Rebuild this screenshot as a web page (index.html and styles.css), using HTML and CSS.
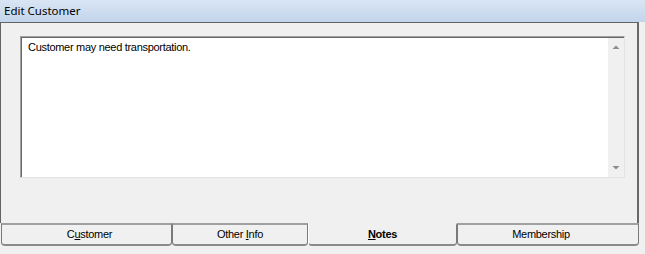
FILE: index.html
```html
<!DOCTYPE html>
<html>
<head>
<meta charset="utf-8">
<link rel="stylesheet" href="styles.css">
</head>
<body>
<div class="window">
  <div class="titlebar">Edit Customer</div>
  <div class="panel">
    <div class="memo">
      <div class="memo-text">Customer may need transportation.</div>
      <div class="scrollbar">
        <svg class="arrow" width="16" height="16" viewBox="0 0 16 16"><polygon points="4.5,11 11.5,11 8,7.5" fill="#8c8c8c"/></svg>
        <svg class="arrow" width="16" height="16" viewBox="0 0 16 16"><polygon points="4.5,5 11.5,5 8,8.5" fill="#8c8c8c"/></svg>
      </div>
    </div>
  </div>
  <div class="tabs">
    <div class="tab tab-customer">C<u>u</u>stomer</div>
    <div class="tab tab-other">Other <u>I</u>nfo</div>
    <div class="tab tab-notes active"><u>N</u>otes</div>
    <div class="tab tab-membership">Membership</div>
  </div>
</div>
</body>
</html>
```

FILE: styles.css
```css
html, body {
  margin: 0;
  padding: 0;
  background: #f0f0f0;
}
.window {
  width: 645px;
  height: 254px;
  overflow: hidden;
  background: #f0f0f0;
  font-family: "Liberation Sans", Arial, sans-serif;
  font-size: 11px;
  letter-spacing: -0.3px;
  color: #000;
}
.titlebar {
  height: 22px;
  line-height: 22px;
  padding-left: 4px;
  font-family: "Noto Sans", "Liberation Sans", sans-serif;
  font-size: 11.5px;
  letter-spacing: 0;
  color: #000;
  background: linear-gradient(#d9e5f3, #c2d5ec);
}
.panel {
  border-top: 1px solid #646464;
  border-left: 1px solid #646464;
  border-right: 2px solid #696969;
  padding: 13px 0 0 19px;
  box-sizing: border-box;
  width: 639px;
  height: 201px;
}
.memo {
  display: flex;
  width: 605px;
  height: 142px;
  box-sizing: border-box;
  background: #fff;
  border-top: 1px solid #a0a0a0;
  border-left: 1px solid #a0a0a0;
  border-right: 1px solid #e3e3e3;
  border-bottom: 1px solid #e3e3e3;
  box-shadow: inset 1px 1px 0 #696969;
}
.memo-text {
  flex: 1;
  padding: 4px 0 0 7px;
  line-height: 13px;
}
.scrollbar {
  width: 16px;
  margin-top: 1px;
  background: #f0f0f0;
  display: flex;
  flex-direction: column;
  justify-content: space-between;
}
.arrow {
  display: block;
}
.tabs {
  display: flex;
  padding-left: 1px;
  height: 23px;
}
.tab {
  box-sizing: border-box;
  height: 23px;
  border-top: 2px solid #a0a0a0;
  border-left: 1px solid #7a7a7a;
  border-right: 1px solid #7a7a7a;
  border-bottom: 2px solid #8a8a8a;
  border-radius: 0 0 4px 4px;
  text-align: center;
  line-height: 17px;
  padding-top: 1px;
}
.tab-customer { width: 171px; padding-left: 6px; }
.tab-other { width: 136px; }
.tab-notes { width: 149px; }
.tab-membership { width: 182px; padding-right: 14px; }
.tab.active {
  border-top: 2px solid transparent;
  border-left: 1px solid #ffffff;
  font-weight: bold;
}
```
